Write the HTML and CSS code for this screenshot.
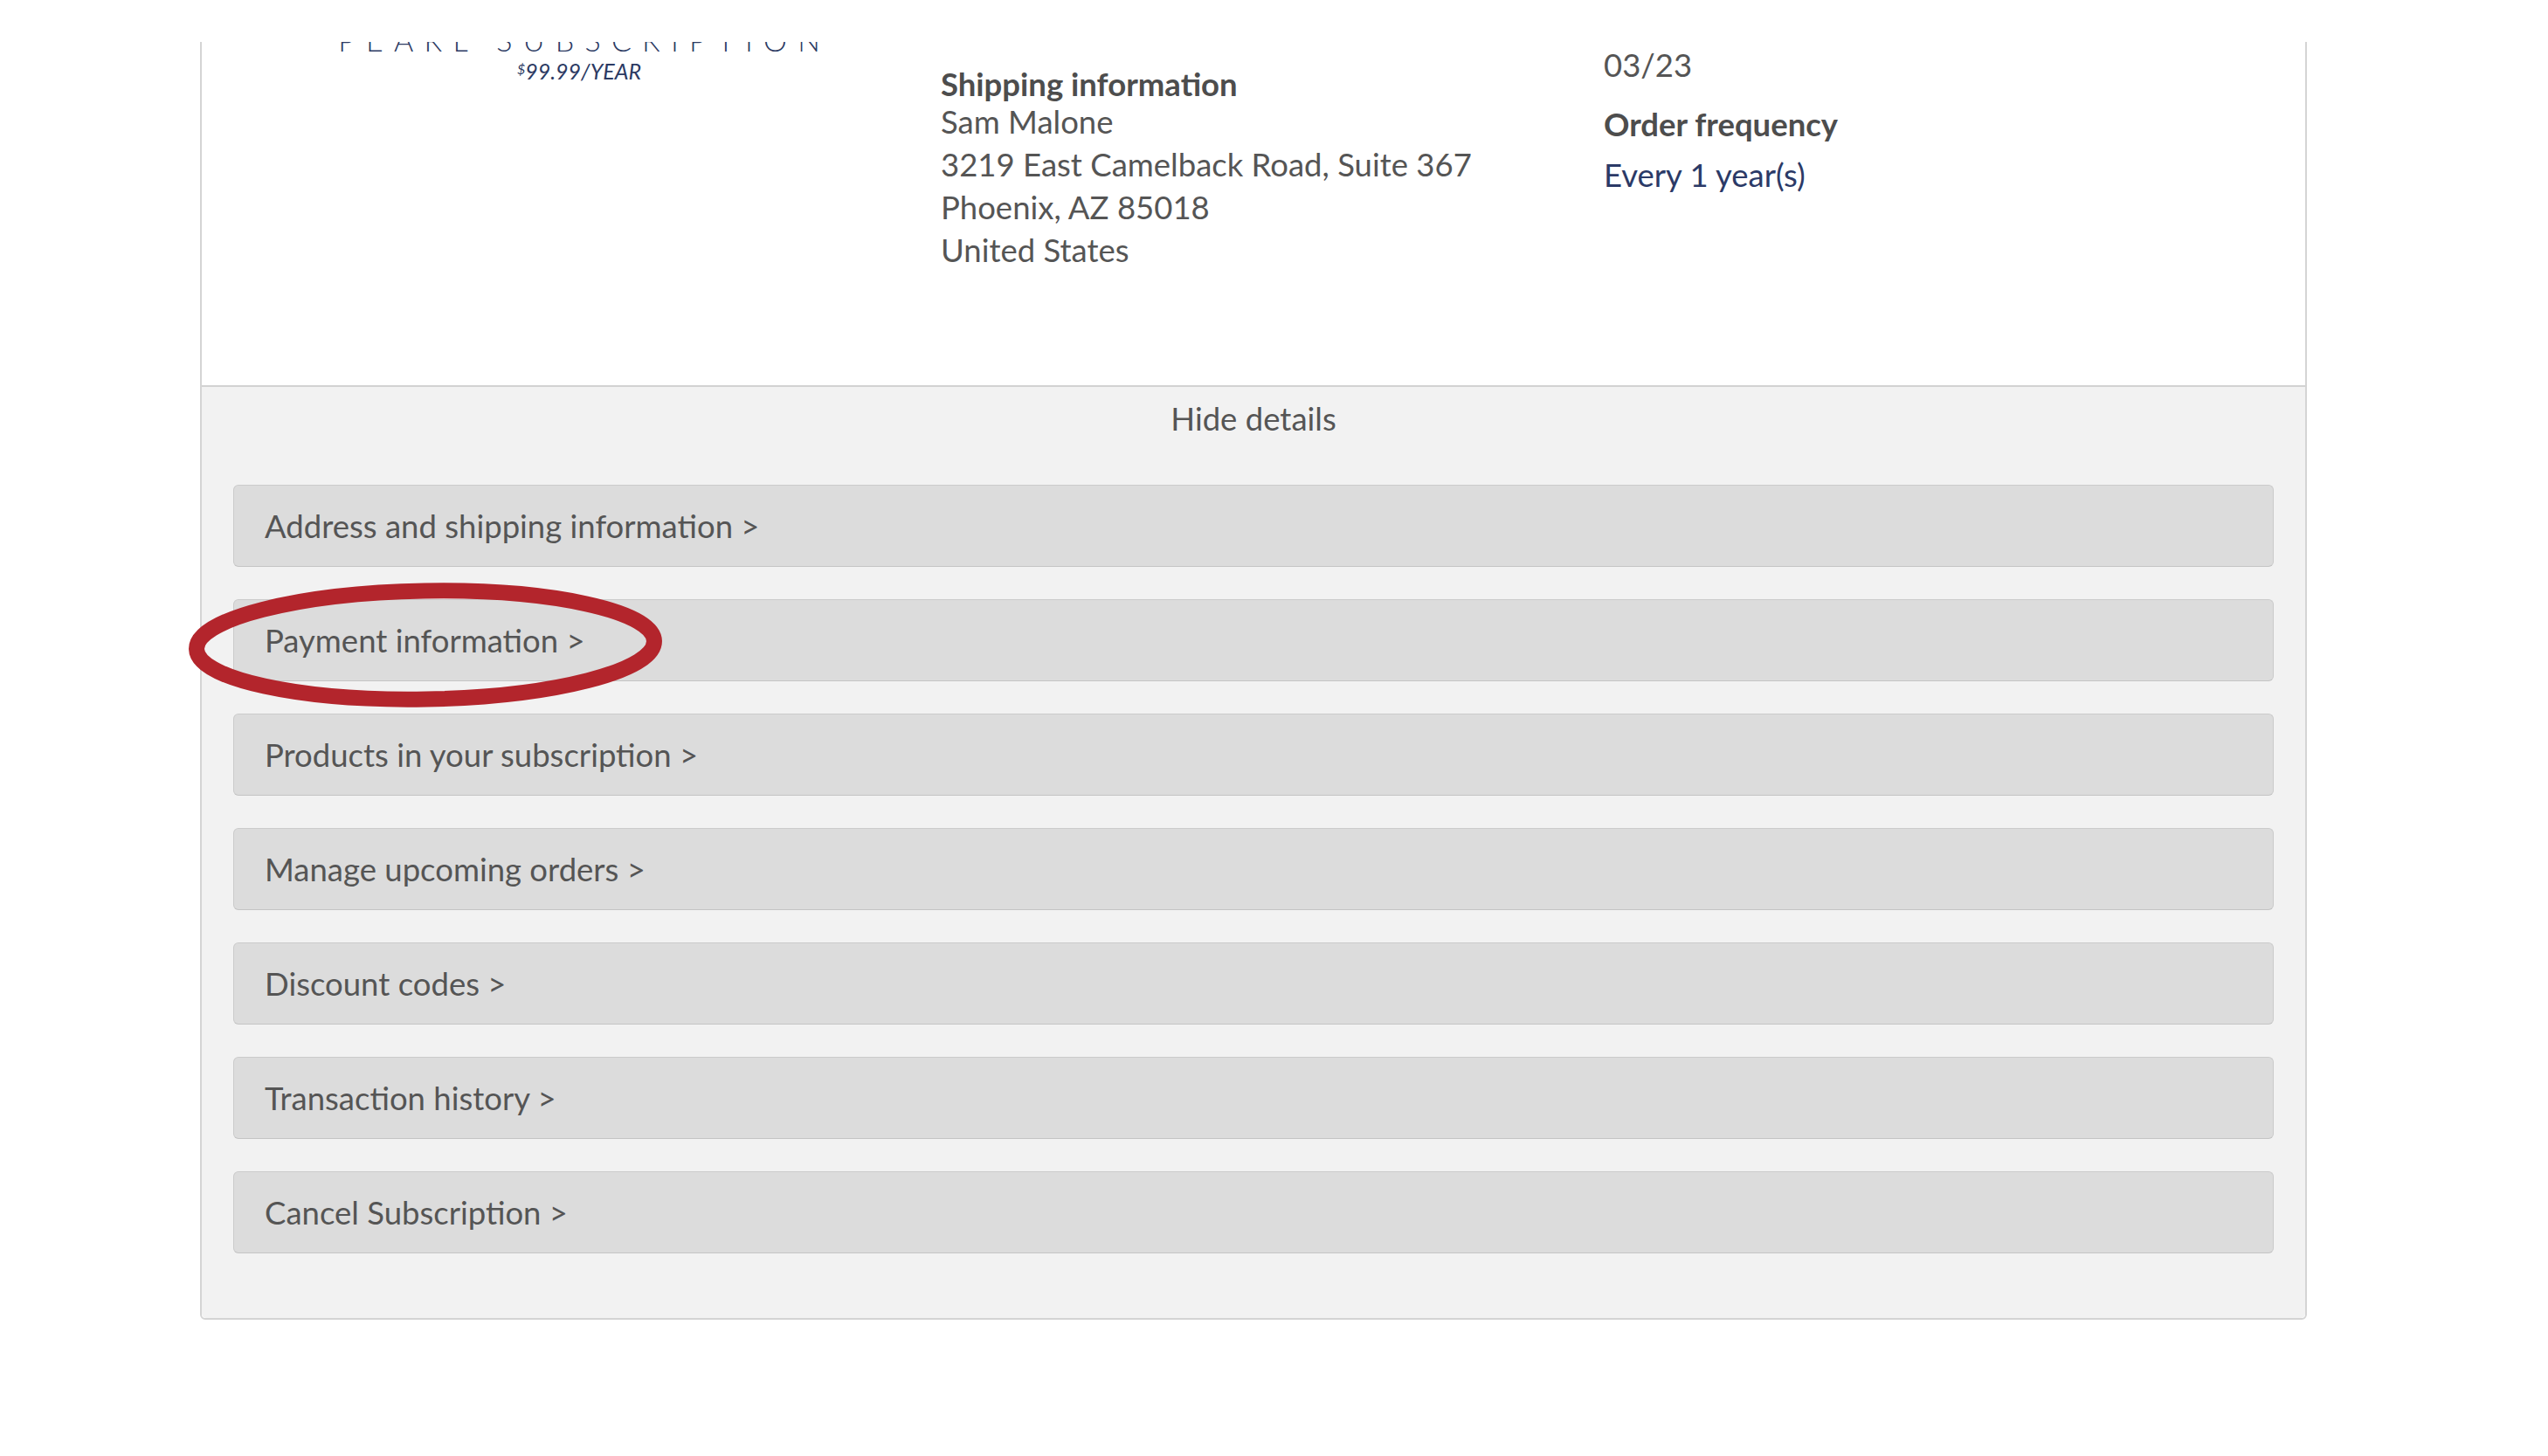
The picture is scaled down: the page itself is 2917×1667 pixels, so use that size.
FILE: index.html
```html
<!DOCTYPE html>
<html lang="en">
  <head>
    <meta charset="UTF-8" />
    <meta name="viewport" content="width=device-width, initial-scale=1.0" />
    <title>My subscription</title>
    <link rel="stylesheet" href="styles.css">
  </head>
  <body>
    <div class="topbar"></div>

    <div class="card">
      <div class="summary">
        <div class="col col-product">
          <div class="product-name">PEARL SUBSCRIPTION</div>
          <div class="product-price"><span class="cur">$</span>99.99/YEAR</div>
        </div>
        <div class="col col-shipping">
          <div class="label">Shipping information</div>
          <div class="line">Sam Malone</div>
          <div class="line">3219 East Camelback Road, Suite 367</div>
          <div class="line">Phoenix, AZ 85018</div>
          <div class="line">United States</div>
        </div>
        <div class="col col-order">
          <div class="line">03/23</div>
          <div class="label label-freq">Order frequency</div>
          <div class="line freq">Every 1 year(s)</div>
        </div>
      </div>

      <div class="details">
        <div class="toggle">Hide details</div>
        <div class="rows">
          <div class="row">Address and shipping information &gt;</div>
          <div class="row row-marked">
            Payment information &gt;
            <!-- red marker drawn over the screenshot -->
            <svg class="marker" width="542" height="143" viewBox="0 0 542 143">
              <ellipse cx="271" cy="71.5" rx="262" ry="62" fill="none" stroke="#b3252c" stroke-width="18" transform="rotate(-1 271 71.5)" />
            </svg>
          </div>
          <div class="row">Products in your subscription &gt;</div>
          <div class="row">Manage upcoming orders &gt;</div>
          <div class="row">Discount codes &gt;</div>
          <div class="row">Transaction history &gt;</div>
          <div class="row">Cancel Subscription &gt;</div>
        </div>
      </div>
    </div>
  </body>
</html>
```

FILE: styles.css
```css
* {
  margin: 0;
  padding: 0;
  box-sizing: border-box;
}

body {
  background-color: #ffffff;
  color: #555555;
  font-family: Lato, "Open Sans", sans-serif;
  font-size: 36.5px;
  height: 1667px;
  overflow: hidden;
}

/* white site header, the page is scrolled under it */
.topbar {
  position: fixed;
  top: 0;
  left: 0;
  width: 100%;
  height: 48px;
  background-color: #ffffff;
  z-index: 10;
}

.card {
  margin-left: 229px;
  width: 2412px;
  border: 2px solid #d4d4d4;
  border-radius: 0 0 6px 6px;
}

.summary {
  display: grid;
  grid-template-columns: 846px 759px 1fr;
  height: 439px;
  background-color: #ffffff;
}

.col-product {
  padding-top: 25px;
  padding-left: 18px;
  text-align: center;
  color: #2c3a63;
}

.product-name {
  font-weight: 300;
  font-size: 34px;
  line-height: 38px;
  letter-spacing: 0.36em;
  margin-right: -0.36em;
}

.product-price {
  font-style: italic;
  font-size: 25px;
  line-height: 28px;
}

.product-price .cur {
  font-size: 16px;
  vertical-align: 6px;
}

.label {
  font-weight: bold;
  color: #4d4d4d;
  line-height: 40px;
}

.line {
  line-height: 49px;
}

.col-shipping {
  padding-top: 75px;
}

.col-shipping .label {
  line-height: 38px;
}

.col-order {
  padding-top: 48px;
}

.label-freq {
  margin-top: 23px;
}

.freq {
  margin-top: 14px;
  color: #2b3a67;
}

.details {
  background-color: #f2f2f2;
  border-top: 2px solid #d2d2d2;
  border-radius: 0 0 5px 5px;
  padding: 12px 36px 74px;
}

.toggle {
  text-align: center;
  line-height: 49px;
}

.rows {
  display: flex;
  flex-direction: column;
  gap: 37px;
  margin-top: 51px;
}

.row {
  position: relative;
  display: flex;
  align-items: center;
  height: 94px;
  padding-left: 35px;
  background-color: #dcdcdc;
  border: 1px solid #cbcbcb;
  border-bottom-color: #c4c4c4;
  border-radius: 6px;
}

.marker {
  position: absolute;
  left: -52px;
  top: -20px;
  overflow: visible;
}
```
